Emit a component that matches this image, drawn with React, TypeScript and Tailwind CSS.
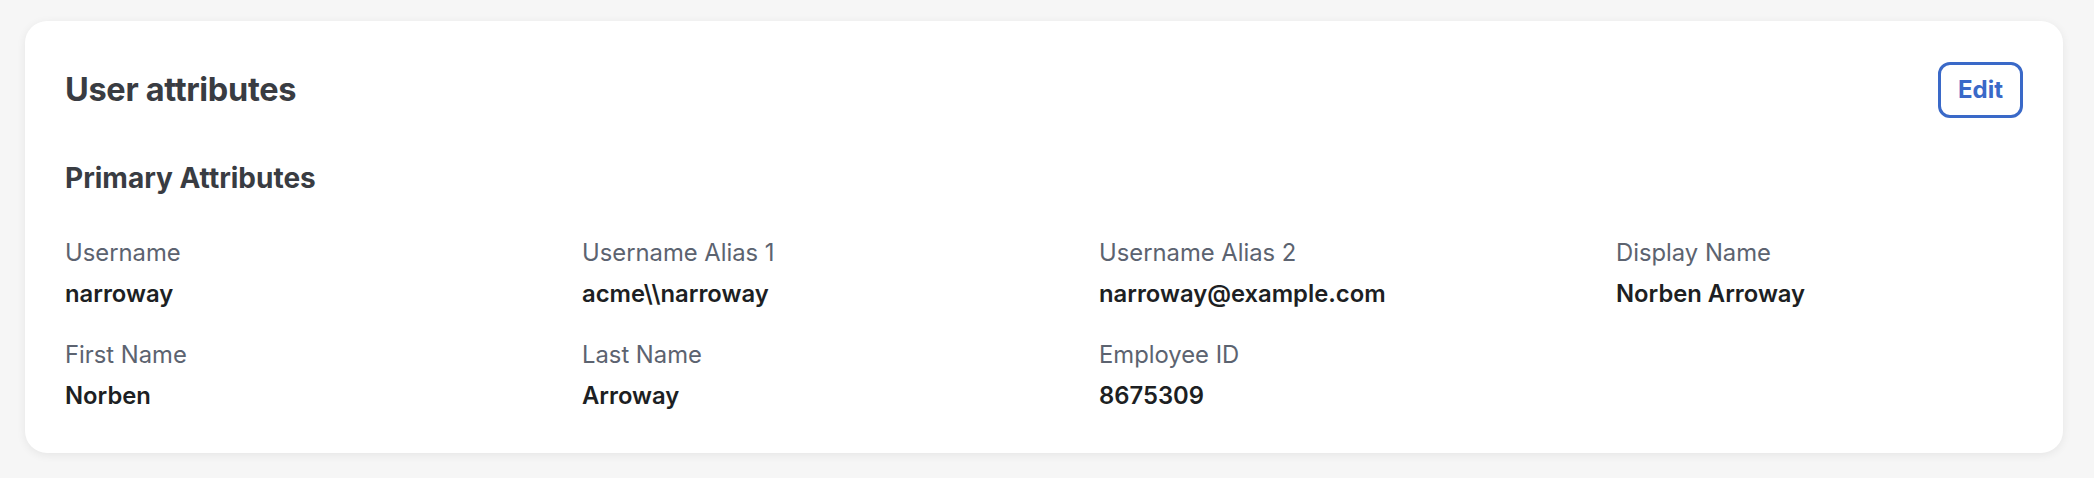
import React from "react";

type Attr = { label: string; value: string };

const PRIMARY: Attr[] = [
  { label: "Username", value: "narroway" },
  { label: "Username Alias 1", value: "acme\\\\narroway" },
  { label: "Username Alias 2", value: "narroway@example.com" },
  { label: "Display Name", value: "Norben Arroway" },
  { label: "First Name", value: "Norben" },
  { label: "Last Name", value: "Arroway" },
  { label: "Employee ID", value: "8675309" },
];

function AttributeItem({ label, value }: Attr) {
  return (
    <div className="flex flex-col gap-[9px]">
      <dt className="text-[23.8px] leading-[32px] text-[#5c6370]">{label}</dt>
      <dd className="text-[23.8px] font-semibold leading-[32px] text-[#1d1f23]">{value}</dd>
    </div>
  );
}

export default function App() {
  return (
    <div
      className="min-h-screen bg-[#f6f6f6] pb-[25px] pl-[25px] pr-[31px] pt-[21px]"
      style={{ fontFamily: "Inter, 'Noto Sans', sans-serif" }}
    >
      <section className="rounded-[22px] bg-white px-[40px] pb-[41px] pt-[41px] shadow-[0_2px_10px_rgba(0,0,0,0.07)]">
        <div className="flex h-[56px] items-center justify-between">
          <h2 className="text-[32.5px] font-bold leading-[40px] tracking-[-0.01em] text-[#393c42]">
            User attributes
          </h2>
          <button
            type="button"
            className="flex h-[56px] w-[85px] items-center justify-center rounded-[12px] border-[3px] border-[#3a69c8] text-[24px] font-bold text-[#3a69c8]"
          >
            Edit
          </button>
        </div>

        <h3 className="mt-[44px] text-[28px] font-bold leading-[32px] text-[#393c42]">
          Primary Attributes
        </h3>

        <dl className="mt-[43px] grid grid-cols-4 gap-x-[110px] gap-y-[29px]">
          {PRIMARY.map((a) => (
            <AttributeItem key={a.label} label={a.label} value={a.value} />
          ))}
        </dl>
      </section>
    </div>
  );
}
